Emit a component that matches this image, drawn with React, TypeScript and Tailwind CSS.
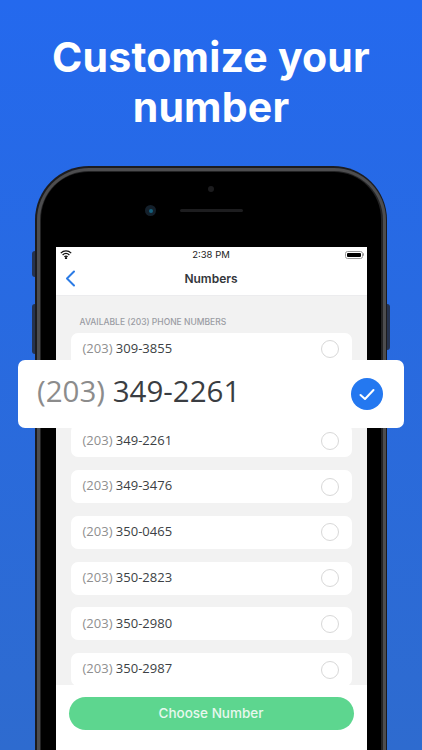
const numbers = ['309-3855', '', '349-2261', '349-3476', '350-0465', '350-2823', '350-2980', '350-2987']
const numberFont = { fontFamily: '"Open Sans", "Liberation Sans", sans-serif' }

function Row({ num }: { num: string }) {
  // the second row sits fully under the selected number card
  if (!num) return <div className="h-[33px] shrink-0 rounded-[7px] bg-white" />
  return (
    <div className="flex h-[33px] shrink-0 items-center justify-between rounded-[7px] bg-white pl-[12px] pr-[12.5px]">
      <span className="pb-[1px] text-[13px] text-[#3c3f44]" style={numberFont}>
        <span className="text-[#8f8f8f]">(203)</span> {num}
      </span>
      <span className="h-[18px] w-[18px] rounded-full border border-[#d8d8d8] bg-white" />
    </div>
  )
}

export default function App() {
  return (
    <div
      className="relative h-[750px] w-[422px] overflow-hidden bg-gradient-to-b from-[#2469ee] to-[#2e6bcf]"
      style={{ fontFamily: 'Inter, "Open Sans", "Liberation Sans", sans-serif' }}
    >
      {/* Heading */}
      <h1 className="h-[166px] pt-[32px] text-center text-[41px] font-bold leading-[50px] tracking-[0.2px] text-white">
        Customize your
        <br />
        number
      </h1>

      {/* Phone */}
      <div className="relative mx-[35px] h-[620px] w-[352px] rounded-t-[54px] bg-[#1c1c1f] p-[1.5px]">
        <span className="absolute -left-[3px] top-[85px] h-[26px] w-[3px] rounded-l-sm bg-[#26334f]" />
        <span className="absolute -left-[3px] top-[138px] h-[50px] w-[3px] rounded-l-sm bg-[#26334f]" />
        <span className="absolute -left-[3px] top-[200px] h-[50px] w-[3px] rounded-l-sm bg-[#26334f]" />
        <span className="absolute -right-[3px] top-[138px] h-[46px] w-[3px] rounded-r-sm bg-[#26334f]" />

        <div className="h-full rounded-t-[52px] bg-[#4d4d4f] px-[3px] pt-[3px]">
          <div className="h-full rounded-t-[49px] bg-[#232324] px-[1.5px] pt-[1.5px]">
            <div className="relative flex h-full flex-col rounded-t-[47px] bg-black px-[14.5px] pt-[75px]">
              <span className="absolute left-[167px] top-[14px] h-[6px] w-[6px] rounded-full bg-[#1c1c1e]" />
              <span className="absolute left-[104px] top-[33px] flex h-[11px] w-[11px] items-center justify-center rounded-full bg-[#14202b]">
                <span className="h-[4px] w-[4px] rounded-full bg-[#14607e]" />
              </span>
              <span className="absolute left-[139px] top-[37px] h-[3px] w-[63px] rounded-full bg-[#1d1d1f]" />

              {/* Screen */}
              <div className="flex h-[503px] flex-col overflow-hidden bg-white">
                <div className="relative flex h-[16px] shrink-0 items-center justify-center px-[4px] pt-[1px]">
                  <svg className="absolute left-[4px] top-[3px]" width="12" height="9" viewBox="0 0 12 9" fill="none" stroke="#111" strokeWidth="1.3">
                    <path d="M.8 3.1C3.8.2 8.2.2 11.2 3.1" />
                    <path d="M2.6 5C4.6 3.1 7.4 3.1 9.4 5" />
                    <path d="M4.4 6.8C5.3 6 6.7 6 7.6 6.8" />
                    <circle cx="6" cy="8.2" r=".5" fill="#111" />
                  </svg>
                  <span className="text-[9.5px] text-[#222]">2:38 PM</span>
                  <span className="absolute right-[4px] top-[3.5px] flex h-[8px] w-[18px] items-center rounded-[2.5px] border border-[#999] p-[1px]">
                    <span className="h-full w-full rounded-[1px] bg-black" />
                    <span className="absolute -right-[2.5px] h-[3px] w-[1.5px] rounded-r-sm bg-[#999]" />
                  </span>
                </div>
                <div className="relative flex h-[33px] shrink-0 items-center justify-center border-b border-[#ececee]">
                  <svg className="absolute left-[9px] top-[7px]" width="11" height="17" viewBox="0 0 11 17" fill="none" stroke="#2b7be5" strokeWidth="2" strokeLinecap="round" strokeLinejoin="round">
                    <path d="M9 1.5 2 8.5l7 7" />
                  </svg>
                  <span className="text-[12px] font-semibold text-[#33363b]">Numbers</span>
                </div>
                <div className="flex min-h-0 flex-1 flex-col gap-[12.75px] overflow-hidden bg-[#f2f2f2] px-[15px] pt-[21px]">
                  <div className="-mb-[7px] h-[10px] shrink-0 pl-[9px] text-[8.5px] font-medium leading-[10px] text-[#9a9ca3]">
                    AVAILABLE (203) PHONE NUMBERS
                  </div>
                  {numbers.map((n, i) => (
                    <Row key={i} num={n} />
                  ))}
                </div>
                <div className="h-[65px] shrink-0 bg-white px-[13px] pt-[12px]">
                  <button className="h-[33px] w-[285px] rounded-full bg-[#5dd68f] text-[13.5px] font-medium text-[#e8f8ee]">
                    Choose Number
                  </button>
                </div>
              </div>
            </div>
          </div>
        </div>
      </div>

      {/* Selected number card */}
      <div className="absolute left-[18px] top-[360px] flex h-[68px] w-[386px] items-center justify-between rounded-[7px] bg-white pb-[6px] pl-[19px] pr-[21px]">
        <span className="text-[29.5px] text-[#3a3d42]" style={numberFont}>
          <span className="text-[#8c8c8c]">(203)</span> 349-2261
        </span>
        <span className="mt-[6px] flex h-[32px] w-[32px] items-center justify-center rounded-full bg-[#2478f0]">
          <svg width="16" height="13" viewBox="0 0 16 13" fill="none" stroke="#fff" strokeWidth="2" strokeLinecap="round" strokeLinejoin="round">
            <path d="M1.5 7 6 11 14.5 2" />
          </svg>
        </span>
      </div>
    </div>
  )
}
